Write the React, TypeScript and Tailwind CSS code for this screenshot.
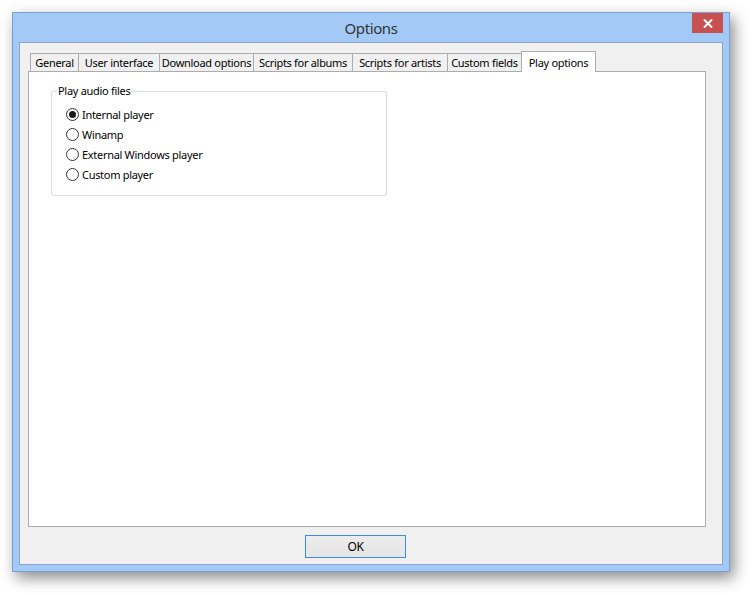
import React, { useState } from 'react';

const tabs = [
  { label: 'General', w: 'w-[49px]' },
  { label: 'User interface', w: 'w-[82px]' },
  { label: 'Download options', w: 'w-[95px]' },
  { label: 'Scripts for albums', w: 'w-[100px]' },
  { label: 'Scripts for artists', w: 'w-[96px]' },
  { label: 'Custom fields', w: 'w-[75px]' },
];

const players = ['Internal player', 'Winamp', 'External Windows player', 'Custom player'];

function Radio({ checked }: { checked: boolean }) {
  return (
    <span className="w-[13px] h-[13px] rounded-full border border-[#333] bg-white flex items-center justify-center shrink-0">
      {checked && <span className="w-[7px] h-[7px] rounded-full bg-[#1a1a1a]" />}
    </span>
  );
}

export default function App() {
  const [player, setPlayer] = useState(0);

  return (
    <div className="w-[750px] h-[593px] bg-white pt-[12px] pl-[12px] text-[11px] tracking-[-0.3px] text-[#000] [font-family:'Noto_Sans',sans-serif]">
      {/* window frame */}
      <div className="w-[718px] h-[560px] border border-[#7b9fcf] bg-[#a3caf6] flex flex-col shadow-[4px_6px_14px_rgba(0,0,0,0.45)]">
        {/* title bar */}
        <div className="relative h-[29px] flex items-center justify-center shrink-0">
          <span className="text-[15px] tracking-[-0.4px] text-[#333] pt-[1px]">Options</span>
          <button className="absolute right-[6px] top-0 w-[31px] h-[20px] bg-[#c75050] flex items-center justify-center">
            <svg width="10" height="9" viewBox="0 0 10 9">
              <path d="M1 0.5 L9 8.5 M9 0.5 L1 8.5" stroke="white" strokeWidth="2" />
            </svg>
          </button>
        </div>

        {/* client area */}
        <div className="flex-1 mx-[6px] mb-[6px] border border-[#8da4c6] bg-[#f0f0f0] flex flex-col">
          <div className="ml-[8px] mt-[8px] w-[678px] h-[476px] flex flex-col">
            {/* tab strip */}
            <div className="h-[20px] flex items-end pl-[2px] relative z-10">
              {tabs.map((t) => (
                <div
                  key={t.label}
                  className={`${t.w} h-[18px] -mr-px border border-b-0 border-[#acacac] bg-[#f0f0f0] flex items-center justify-center whitespace-nowrap leading-none`}
                >
                  {t.label}
                </div>
              ))}
              <div className="w-[75px] h-[21px] -mb-px border border-b-0 border-[#acacac] bg-white flex items-center justify-center whitespace-nowrap leading-none">
                Play options
              </div>
            </div>
            {/* tab page */}
            <div className="flex-1 border border-[#acacac] bg-white pl-[22px] pt-[19px]">
              <div className="relative w-[336px] h-[105px] border border-[#dcdcdc] rounded-[2px] pl-[14px] pt-[14px] flex flex-col">
                <span className="absolute left-[5px] top-[-9px] bg-white px-[1px] leading-[16px]">Play audio files</span>
                <div className="flex flex-col gap-[3px]">
                  {players.map((p, i) => (
                    <label key={p} className="flex items-center gap-[3px] h-[17px] cursor-default" onClick={() => setPlayer(i)}>
                      <Radio checked={player === i} />
                      <span className="leading-none">{p}</span>
                    </label>
                  ))}
                </div>
              </div>
            </div>
          </div>
          {/* footer */}
          <div className="flex-1 flex items-center pl-[285px] pt-[2px]">
            <button className="w-[101px] h-[23px] border border-[#3c8ce6] bg-[linear-gradient(#ececec,#e5e5e5)] flex items-center justify-center leading-none text-[12px]">
              OK
            </button>
          </div>
        </div>
      </div>
    </div>
  );
}
